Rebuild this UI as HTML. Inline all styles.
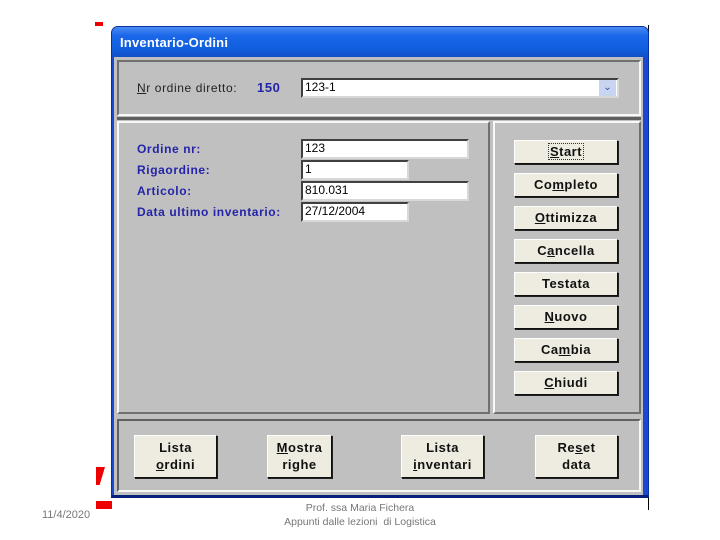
<!DOCTYPE html>
<html><head><meta charset="utf-8"><style>
*{margin:0;padding:0;box-sizing:border-box}
body{width:720px;height:540px;background:#fff;position:relative;overflow:hidden;font-family:"Liberation Sans",Arial,sans-serif}
.a{position:absolute}
.win{left:111px;top:26px;width:538px;height:472px;background:#1a48d0;border-radius:7px 7px 0 0;border:1px solid #0830a0;border-bottom:3px solid #06207a}
.title{left:112px;top:27px;width:536px;height:30px;background:linear-gradient(#4a8cf4,#1a66e8 30%,#1060e0 70%,#1050c8);border-radius:6px 6px 0 0}
.title span{position:absolute;left:8px;top:8px;color:#fff;font-weight:bold;font-size:13px;letter-spacing:0.2px}
.body{left:114px;top:57px;width:529px;height:438px;background:#c0c0c0}
.pnl{background:#c0c0c0;border:2px solid;border-color:#707070 #f8f8f8 #f8f8f8 #707070}
.lbl{color:#2424a8;font-weight:bold;font-size:12px;letter-spacing:0.6px}
.inp{background:#fff;border:2px solid;border-color:#404040 #d8d8d8 #d8d8d8 #404040;font-size:12px;padding-left:2px;line-height:15px;color:#000}
.btn{background:#eeece0;border:1px solid;border-color:#fff #101010 #101010 #fff;box-shadow:1px 1px 0 #202020;font-weight:bold;font-size:13px;text-align:center;color:#111;letter-spacing:0.5px}
.rb{left:514px;width:104px;height:24px;line-height:22px}
.bb{top:435px;height:43px;line-height:17px;padding-top:3px}
u{text-decoration:underline}
</style></head><body>
<div class="a" style="left:95px;top:22px;width:8px;height:4px;background:#e00"></div>
<div class="a" style="left:96px;top:467px;width:9px;height:18px;background:#e00;clip-path:polygon(0 0,100% 0,40% 100%,0 100%)"></div>
<div class="a" style="left:96px;top:501px;width:16px;height:8px;background:#e00"></div>
<div class="a" style="left:648px;top:25px;width:1px;height:485px;background:#000"></div>
<div class="a win"></div>
<div class="a title"><span>Inventario-Ordini</span></div>
<div class="a body"></div>
<div class="a pnl" style="left:117px;top:60px;width:524px;height:56px"></div>
<div class="a" style="left:117px;top:117px;width:524px;height:3px;background:#606060"></div>
<div class="a lbl" style="left:137px;top:81px;color:#222;font-weight:normal;font-size:12px;letter-spacing:0.6px"><u>N</u>r ordine diretto:</div>
<div class="a lbl" style="left:257px;top:80px;font-size:13px">150</div>
<div class="a inp" style="left:301px;top:78px;width:318px;height:20px">123-1</div>
<div class="a" style="left:599px;top:80px;width:17px;height:16px;background:#c8d4f0;color:#3050a0;font-size:10px;text-align:center;line-height:16px">&#8964;</div>
<div class="a pnl" style="left:117px;top:121px;width:373px;height:293px;border-color:#f8f8f8 #707070 #707070 #f8f8f8"></div>
<div class="a pnl" style="left:493px;top:121px;width:148px;height:293px;border-color:#f8f8f8 #707070 #707070 #f8f8f8"></div>
<div class="a lbl" style="left:137px;top:142px">Ordine nr:</div>
<div class="a lbl" style="left:137px;top:163px">Rigaordine:</div>
<div class="a lbl" style="left:137px;top:184px">Articolo:</div>
<div class="a lbl" style="left:137px;top:205px">Data ultimo inventario:</div>
<div class="a inp" style="left:301px;top:139px;width:168px;height:20px">123</div>
<div class="a inp" style="left:301px;top:160px;width:108px;height:20px">1</div>
<div class="a inp" style="left:301px;top:181px;width:168px;height:20px">810.031</div>
<div class="a inp" style="left:301px;top:202px;width:108px;height:20px">27/12/2004</div>
<div class="a btn rb" style="top:140px"><span style="border:1px dotted #333;padding:0 1px"><u>S</u>tart</span></div>
<div class="a btn rb" style="top:173px">Co<u>m</u>pleto</div>
<div class="a btn rb" style="top:206px"><u>O</u>ttimizza</div>
<div class="a btn rb" style="top:239px">C<u>a</u>ncella</div>
<div class="a btn rb" style="top:272px">Testata</div>
<div class="a btn rb" style="top:305px"><u>N</u>uovo</div>
<div class="a btn rb" style="top:338px">Ca<u>m</u>bia</div>
<div class="a btn rb" style="top:371px"><u>C</u>hiudi</div>
<div class="a pnl" style="left:117px;top:419px;width:524px;height:73px;border-color:#606060 #f8f8f8 #f8f8f8 #606060"></div>
<div class="a btn bb" style="left:134px;width:83px">Lista<br><u>o</u>rdini</div>
<div class="a btn bb" style="left:267px;width:65px"><u>M</u>ostra<br>righe</div>
<div class="a btn bb" style="left:401px;width:83px">Lista<br><u>i</u>nventari</div>
<div class="a btn bb" style="left:535px;width:83px">Re<u>s</u>et<br>data</div>
<div class="a" style="left:42px;top:509px;font-size:11px;color:#777">11/4/2020</div>
<div class="a" style="left:260px;top:501px;width:200px;text-align:center;font-size:10.5px;line-height:14px;color:#777">Prof. ssa Maria Fichera<br>Appunti dalle lezioni &nbsp;di Logistica</div>
</body></html>
